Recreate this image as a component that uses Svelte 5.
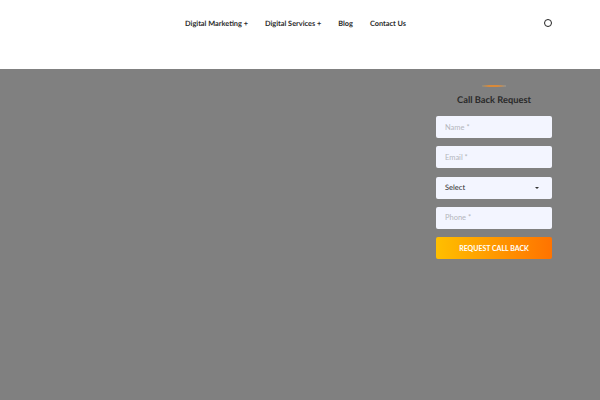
<script>
  const fields = [
    { type: 'text', label: 'Name *' },
    { type: 'email', label: 'Email *' },
    { type: 'select', label: 'Select' },
    { type: 'tel', label: 'Phone *' }
  ]
  const nav = ['Digital Marketing +', 'Digital Services +', 'Blog', 'Contact Us']
</script>

<div class="page">
  <header class="top">
    <nav class="menu">
      {#each nav as item}
        <span class="link">{item}</span>
      {/each}
    </nav>
    <span class="search"></span>
  </header>

  <main class="hero">
    <form class="callback" on:submit|preventDefault>
      <div class="divider"><span class="dash"></span></div>
      <h3>Call Back Request</h3>
      {#each fields as f}
        {#if f.type === 'select'}
          <div class="field select">{f.label}<span class="caret"></span></div>
        {:else}
          <input class="field" type={f.type} placeholder={f.label} />
        {/if}
      {/each}
      <button type="submit">REQUEST CALL BACK</button>
    </form>
  </main>
</div>

<style>
  :global(body) { margin: 0; }
  .page {
    width: 600px; height: 400px;
    display: flex; flex-direction: column;
    font-family: "Lato", "Open Sans", sans-serif;
    text-rendering: geometricPrecision;
    overflow: hidden;
  }
  .top {
    height: 69px; flex-shrink: 0;
    background: #fff;
    display: flex; align-items: flex-start;
    padding: 18px 48px 0 185px;
    box-sizing: border-box;
  }
  .menu { display: flex; gap: 17px; flex: 1; }
  .link { font-size: 7.35px; font-weight: 700; line-height: 11px; color: #2a2a2a; white-space: nowrap; }
  .search {
    width: 6px; height: 6px; margin-top: 1px;
    border: 1px solid #222; border-radius: 50%;
  }
  .hero {
    flex: 1;
    background: #808080;
    display: flex; justify-content: flex-end;
    padding: 16px 48px 0 0;
  }
  .callback { width: 116px; display: flex; flex-direction: column; }
  .divider { display: flex; justify-content: center; height: 3px; margin-bottom: 5px; }
  .dash { width: 24px; height: 2px; background: linear-gradient(90deg, #8a8a80, #d98a3a 30%, #d98a3a 65%, #8a8f90); }
  h3 {
    margin: 0 0 9px; text-align: center;
    font-size: 9.3px; font-weight: 700; line-height: 14px; color: #2a2a2a;
  }
  .field {
    box-sizing: border-box;
    height: 22px; width: 100%;
    margin: 0 0 8.3px;
    padding: 0 9px;
    background: #f3f5ff;
    border: none; border-radius: 2px; outline: none;
    font: 400 7.5px "Lato", sans-serif;
    color: #3a3a3a;
  }
  .field::placeholder { color: #b4b6bc; opacity: 1; }
  .select { display: flex; align-items: center; justify-content: space-between; font-weight: 500; }
  .caret {
    width: 0; height: 0; margin-right: 4px;
    border: 2.5px solid transparent; border-top-color: #333; border-bottom: 0;
  }
  button {
    height: 22px; padding: 0; border: none; border-radius: 2px;
    background: linear-gradient(90deg, #ffbf00, #ff7300);
    color: #fff; font: 700 7px "Lato", sans-serif;
  }
</style>
